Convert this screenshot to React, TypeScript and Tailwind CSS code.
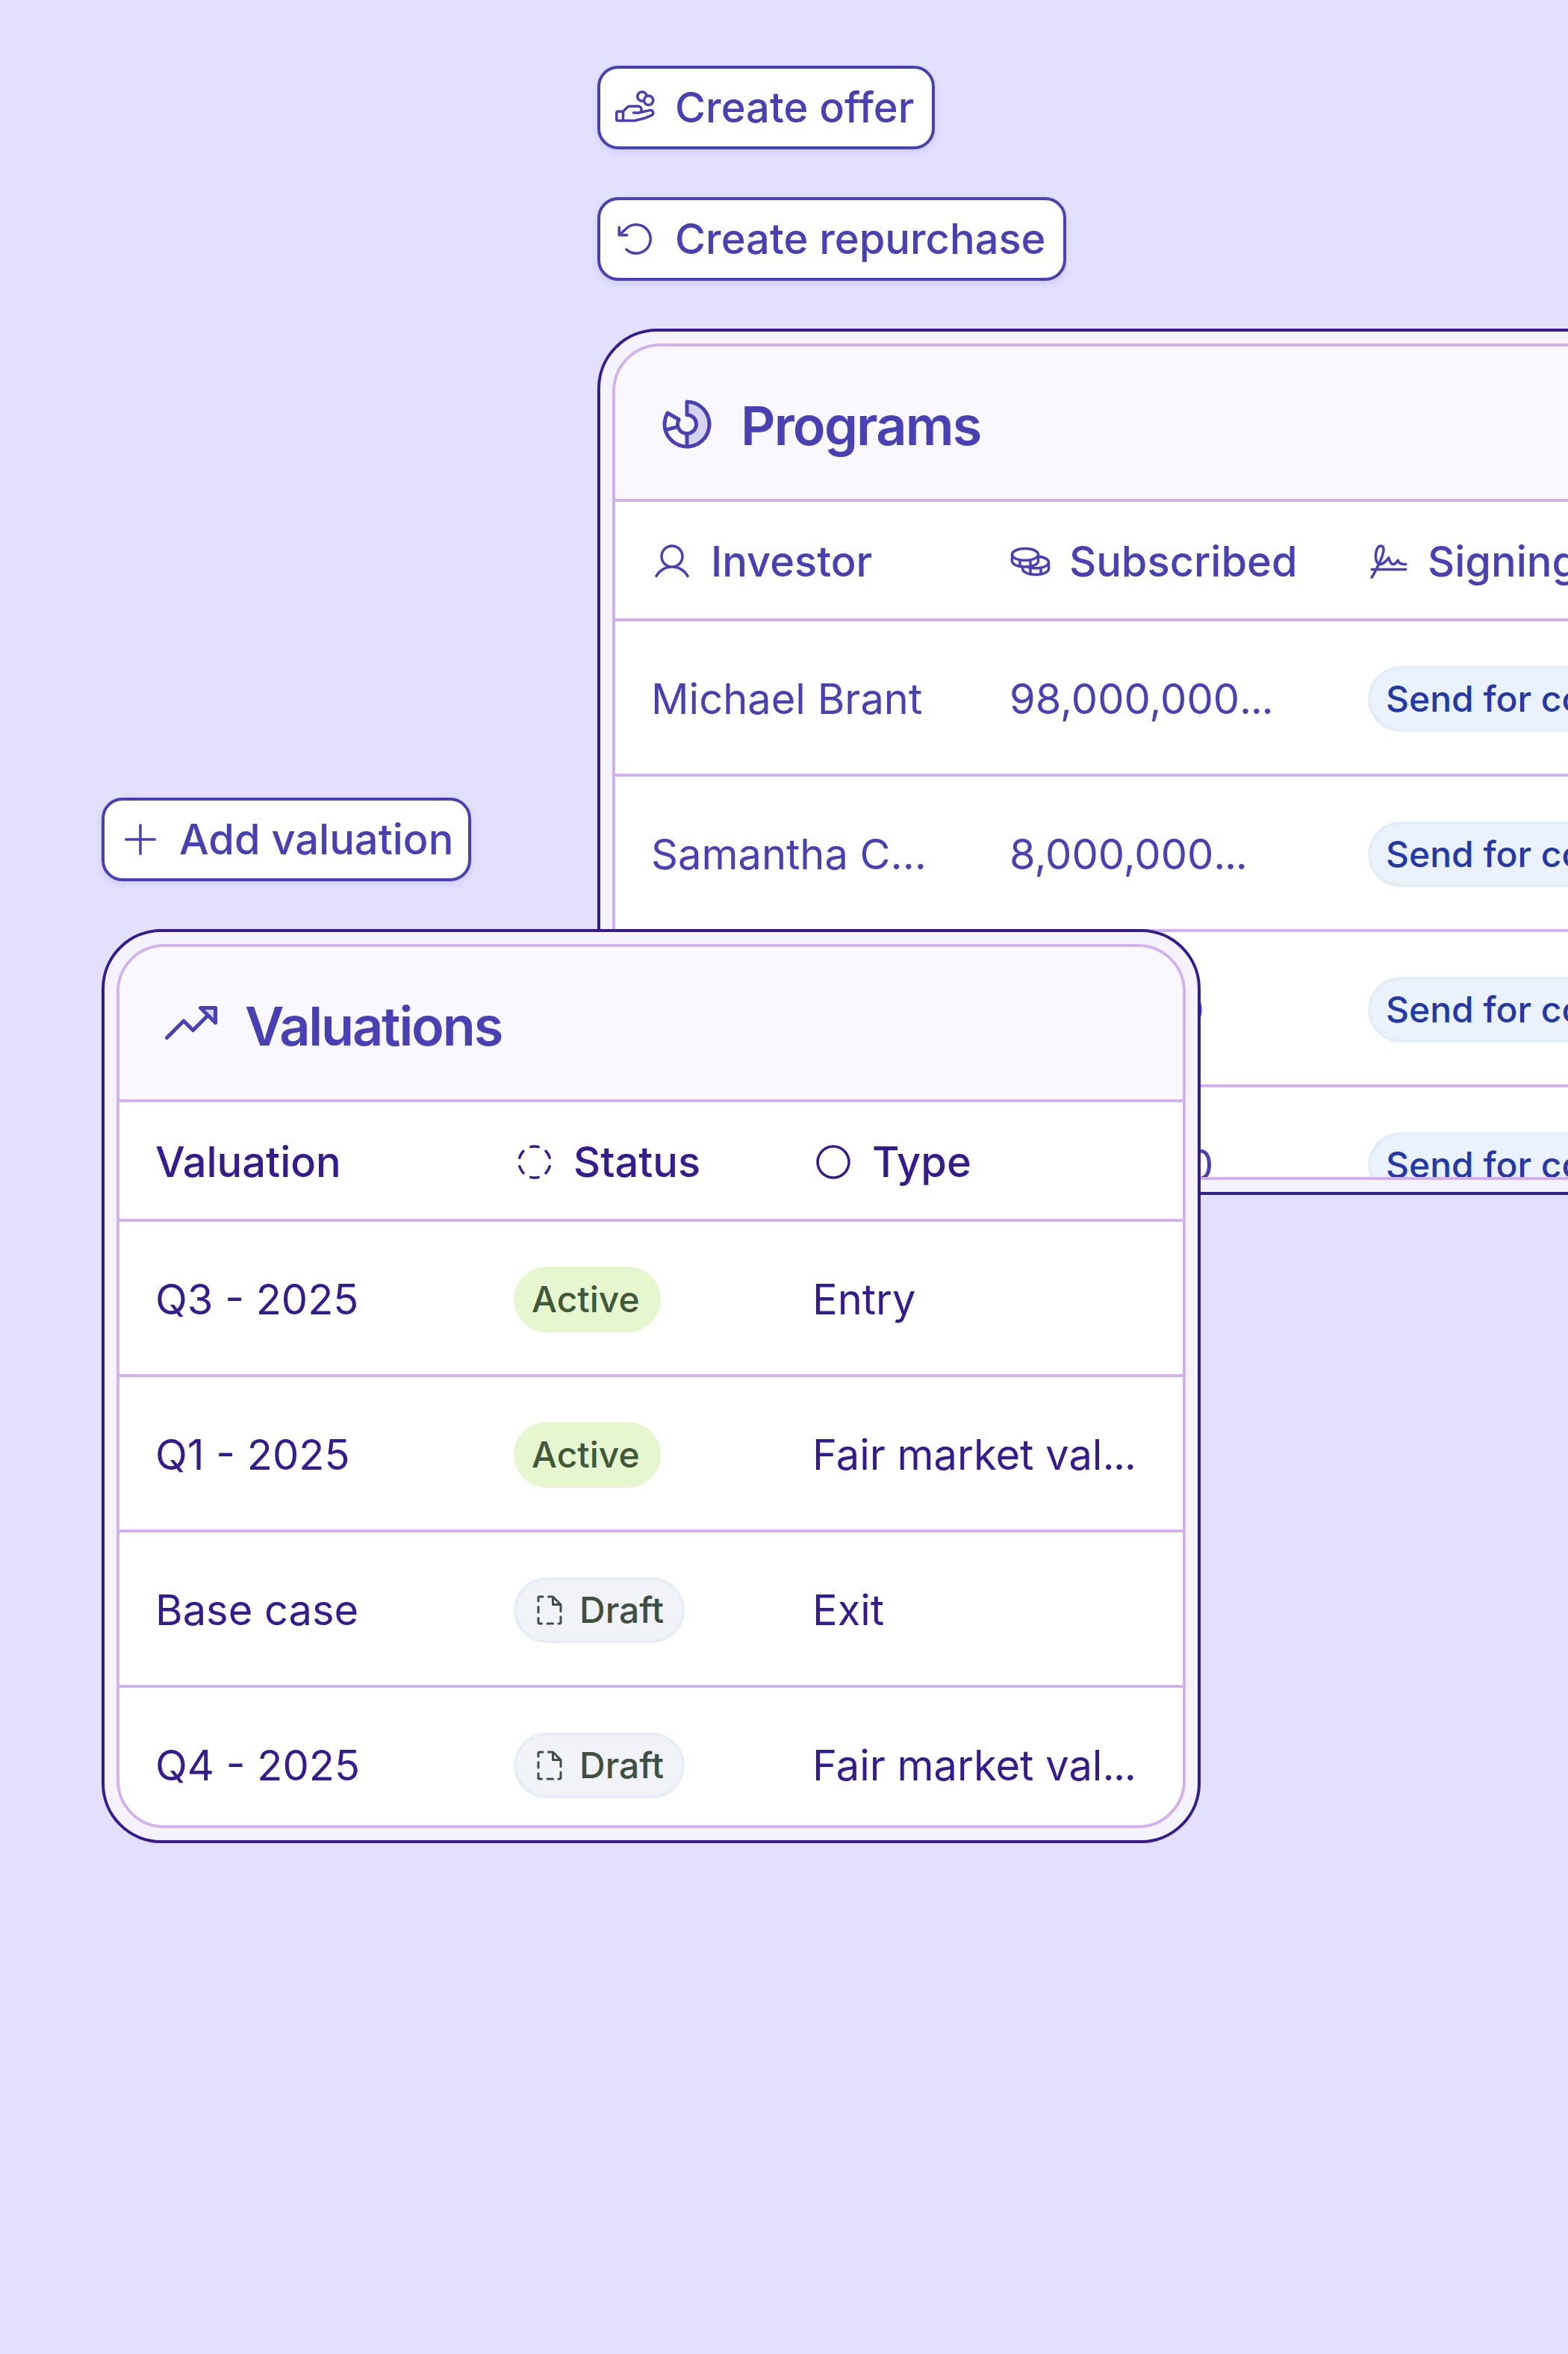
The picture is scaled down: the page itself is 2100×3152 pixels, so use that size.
import { ReactNode } from "react";
import {
  PiArrowCounterClockwise,
  PiChartDonutDuotone,
  PiCircle,
  PiCircleDashed,
  PiCoins,
  PiFileDashed,
  PiHandCoins,
  PiPlus,
  PiSignature,
  PiTrendUpDuotone,
  PiUser,
} from "react-icons/pi";

const programRows = [
  { investor: "Michael Brant", subscribed: "98,000,000", cut: true },
  { investor: "Samantha C...", subscribed: "8,000,000", cut: true },
  { investor: "", subscribed: "7,700,000", cut: false },
  { investor: "", subscribed: "8,000,000", cut: false },
];

const valuationRows = [
  { name: "Q3 - 2025", status: "Active", type: "Entry", cut: false },
  { name: "Q1 - 2025", status: "Active", type: "Fair market val", cut: true },
  { name: "Base case", status: "Draft", type: "Exit", cut: false },
  { name: "Q4 - 2025", status: "Draft", type: "Fair market val", cut: true },
];

function Dots() {
  return <span className="tracking-[-0.025em]">...</span>;
}

function ActionButton({ icon, label, padRight }: { icon: ReactNode; label: string; padRight: string }) {
  return (
    <button className={`flex h-[112px] w-fit items-center gap-6 rounded-[28px] border-4 border-[#4a40b5] bg-white pl-5 text-[56px] font-medium leading-[80px] text-[#4a40b5] shadow-[0_4px_8px_rgba(74,64,181,0.12)] ${padRight}`}>
      {icon}
      {label}
    </button>
  );
}

function Card({ icon, title, titleClass, children, height }: { icon: ReactNode; title: string; titleClass: string; children: ReactNode; height: string }) {
  return (
    <div className={`rounded-[80px] border-4 border-[#351c8e] bg-[#f5f3ff] p-4 ${height}`}>
      <div className="flex h-full flex-col overflow-hidden rounded-[64px] border-4 border-[#d3b0ee] bg-white">
        <div className="flex h-[208px] shrink-0 items-center gap-8 border-b-4 border-[#d3b0ee] bg-[#f9f8ff] pl-14 pt-1 text-[#4a40b5]">
          {icon}
          <span className={`pt-1 text-[72px] font-semibold leading-[96px] ${titleClass}`}>{title}</span>
        </div>
        {children}
      </div>
    </div>
  );
}

function HeaderCell({ icon, label }: { icon?: ReactNode; label: string }) {
  return (
    <div className="flex items-center gap-6 pl-12 pt-1 text-[56px] font-medium leading-[80px]">
      {icon}
      {label}
    </div>
  );
}

function StatusPill({ status }: { status: string }) {
  if (status === "Active") {
    return (
      <span className="flex h-[88px] items-center rounded-full border-4 border-[#e6f6cf] bg-[#e6f6cf] pl-5 pr-6 text-[48px] font-medium leading-[64px] text-[#42583a]">
        Active
      </span>
    );
  }
  return (
    <span className="flex h-[88px] items-center gap-4 rounded-full border-4 border-[#e8edf5] bg-[#f2f3f9] pl-5 pr-6 text-[48px] font-medium leading-[64px] text-[#3e5040]">
      <PiFileDashed size={48} />
      Draft
    </span>
  );
}

export default function App() {
  return (
    <div className="grid h-[3152px] w-[2100px] grid-cols-[2100px] overflow-hidden bg-[#e3dfff] font-[Inter,sans-serif]">
      <div className="col-start-1 row-start-1 flex w-[2400px] flex-col gap-16 pl-[800px] pt-[88px]">
        <ActionButton icon={<PiHandCoins size={56} />} label="Create offer" padRight="pr-6" />
        <ActionButton icon={<PiArrowCounterClockwise size={56} />} label="Create repurchase" padRight="pr-6" />
        <Card icon={<PiChartDonutDuotone size={80} />} title="Programs" titleClass="tracking-[-0.025em]" height="h-[1160px]">
          <div className="grid h-[160px] shrink-0 grid-cols-[480px_480px_1fr] border-b-4 border-[#d3b0ee] text-[#4a40b5]">
            <HeaderCell icon={<PiUser size={56} />} label="Investor" />
            <HeaderCell icon={<PiCoins size={56} />} label="Subscribed" />
            <HeaderCell icon={<PiSignature size={56} />} label="Signing status" />
          </div>
          {programRows.map((row, i) => (
            <div key={i} className="grid h-[208px] shrink-0 grid-cols-[480px_480px_1fr] border-b-4 border-[#d3b0ee] pt-1 text-[56px] leading-[80px] text-[#4a40b5]">
              <div className="flex items-center pl-12">{row.investor}</div>
              <div className="flex items-center pl-12">
                <span>
                  {row.subscribed}
                  {row.cut && <Dots />}
                </span>
              </div>
              <div className="flex items-center pl-12">
                <span className="flex h-[88px] items-center whitespace-nowrap rounded-full border-4 border-[#e4ecf8] bg-[#eaf2fd] px-5 text-[48px] font-medium leading-[64px] text-[#2438a8]">
                  Send for countersignature
                </span>
              </div>
            </div>
          ))}
        </Card>
      </div>

      <div className="col-start-1 row-start-1 ml-[136px] mt-[1068px] flex w-[1472px] flex-col gap-16">
        <ActionButton icon={<PiPlus size={56} />} label="Add valuation" padRight="pr-5" />
        <Card icon={<PiTrendUpDuotone size={80} />} title="Valuations" titleClass="tracking-[-0.03em]" height="h-[1224px]">
          <div className="grid h-[160px] shrink-0 grid-cols-[480px_400px_1fr] border-b-4 border-[#d3b0ee] text-[#351c8e]">
            <HeaderCell label="Valuation" />
            <HeaderCell icon={<PiCircleDashed size={56} />} label="Status" />
            <HeaderCell icon={<PiCircle size={56} />} label="Type" />
          </div>
          {valuationRows.map((row) => (
            <div key={row.name} className="grid h-[208px] shrink-0 grid-cols-[480px_400px_1fr] border-b-4 border-[#d3b0ee] pt-1 text-[56px] leading-[80px] text-[#351c8e]">
              <div className="flex items-center pl-12">{row.name}</div>
              <div className="flex items-center pl-12">
                <StatusPill status={row.status} />
              </div>
              <div className="flex items-center pl-12">
                <span>
                  {row.type}
                  {row.cut && <Dots />}
                </span>
              </div>
            </div>
          ))}
        </Card>
      </div>
    </div>
  );
}
